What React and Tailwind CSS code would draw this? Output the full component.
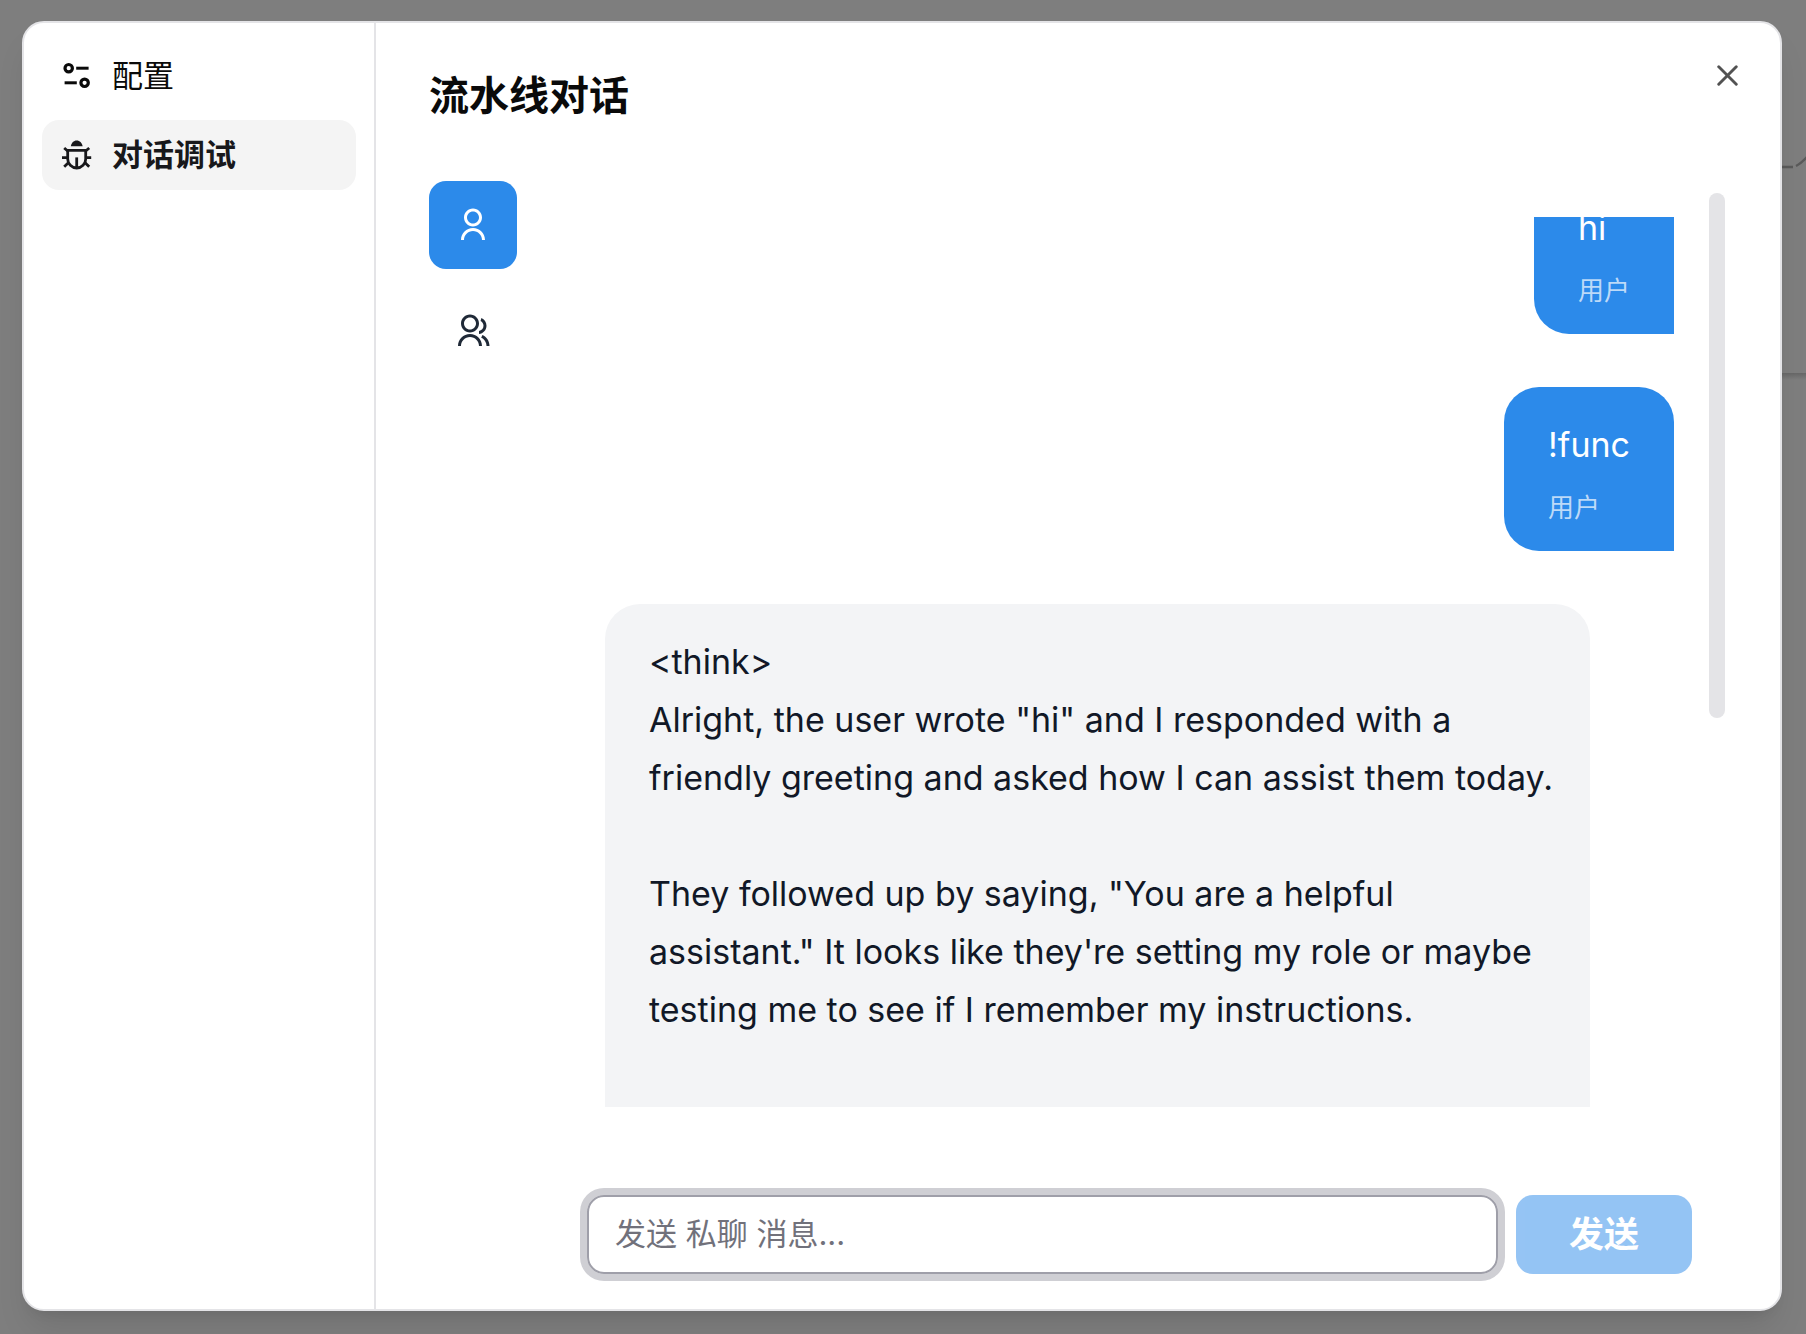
import { useState } from 'react';
import { RiUserLine, RiGroupLine } from 'react-icons/ri';
import { X } from 'lucide-react';

function ConfigIcon({ className }) {
  return (
    <svg className={className} viewBox="0 0 30 30" fill="none" stroke="currentColor" strokeWidth="3" aria-hidden="true">
      <circle cx="6.7" cy="7.2" r="3.7" strokeWidth="3.2" />
      <path d="M14.2 7.2H26.6" />
      <circle cx="22.6" cy="21.8" r="3.7" strokeWidth="3.2" />
      <path d="M2.6 21.8H14.8" />
    </svg>
  );
}

function BugIcon({ className }) {
  return (
    <svg className={className} viewBox="0 0 30 30" fill="none" stroke="currentColor" strokeWidth="2.8" aria-hidden="true">
      <path d="M8.8 6.2C9.4 2.6 11.6 0.4 14.7 0.4S20 2.6 20.6 6.2Z" fill="currentColor" stroke="none" />
      <path d="M5.7 10.3H23.7V19A9 9 0 0 1 5.7 19Z" />
      <path d="M14.7 17.4V28" />
      <path d="M0 17.6H5.7M23.7 17.6H29.2" />
      <path d="M2.2 8L5.7 11M27.2 8L23.7 11M2.2 26.8L6.6 22.6M27.2 26.8L22.8 22.6" />
    </svg>
  );
}

const navItems = [
  { key: 'config', label: '配置', icon: ConfigIcon },
  { key: 'debug', label: '对话调试', icon: BugIcon },
];

const sessionTypes = [
  { key: 'person', label: '私聊', icon: RiUserLine },
  { key: 'group', label: '群聊', icon: RiGroupLine },
];

const reply = `<think>
Alright, the user wrote "hi" and I responded with a friendly greeting and asked how I can assist them today.

They followed up by saying, "You are a helpful assistant." It looks like they're setting my role or maybe testing me to see if I remember my instructions.`;

function UserMessage({ children }) {
  return (
    <div className="shrink-0 self-end rounded-[35px] rounded-br-none bg-[#2c8aea] px-[44px] pt-[29px] pb-[25px] text-white">
      <p className="text-[34px] leading-[58px]">{children}</p>
      <p className="mt-[16px] text-[26px] leading-[36px] text-white/70">用户</p>
    </div>
  );
}

export default function App() {
  const [active, setActive] = useState('debug');
  const [session, setSession] = useState('person');
  const [message, setMessage] = useState('');

  return (
    <div className="relative h-screen overflow-hidden bg-[#7e7e7e] pt-[21px] pr-[24px] pb-[23px] pl-[22px] font-[Inter,'Noto_Sans_CJK_SC',sans-serif] text-[#0a0a0a]">
      {/* Dimmed page behind the dialog */}
      <svg className="absolute top-0 right-0 h-[400px] w-[24px]" viewBox="0 0 24 400" fill="none" aria-hidden="true">
        <defs>
          <linearGradient id="edge" x1="0" y1="0" x2="0" y2="1">
            <stop offset="0" stopColor="#676767" />
            <stop offset="1" stopColor="#7e7e7e" />
          </linearGradient>
        </defs>
        <path d="M0 167H11M14 166C19 163.5 22 160 25 157" stroke="#5a5a5a" strokeWidth="2.5" />
        <rect y="373" width="24" height="7" fill="url(#edge)" />
      </svg>

      <div
        role="dialog"
        aria-labelledby="dialog-title"
        className="relative flex h-full rounded-[22px] border-2 border-[#e4e4e7] bg-white shadow-[0_22px_33px_-7px_rgba(0,0,0,0.1),0_9px_13px_-9px_rgba(0,0,0,0.1)]"
      >
        {/* Sidebar */}
        <nav className="flex w-[352px] shrink-0 flex-col gap-[9px] border-r-2 border-[#e4e4e7] p-[18px]">
          {navItems.map(({ key, label, icon: Icon }) => (
            <button
              key={key}
              onClick={() => setActive(key)}
              className={`flex h-[70px] items-center gap-[20px] rounded-[17px] px-[20px] text-[31px] ${
                active === key ? 'bg-[#f4f4f4] font-semibold text-[#18181b]' : 'font-normal'
              }`}
            >
              <Icon className="size-[30px] shrink-0" />
              {label}
            </button>
          ))}
        </nav>

        {/* Main panel */}
        <main className="flex min-w-0 flex-1 flex-col px-[53px]">
          <h2 id="dialog-title" className="pt-[44px] text-[40px] leading-[58px] font-semibold">流水线对话</h2>

          <div className="mt-[56px] flex min-h-0 flex-1 gap-[35px]">
            <div className="flex shrink-0 flex-col gap-[18px]">
              {sessionTypes.map(({ key, label, icon: Icon }) => (
                <button
                  key={key}
                  aria-label={label}
                  onClick={() => setSession(key)}
                  className={`flex size-[88px] items-center justify-center rounded-[17px] ${
                    session === key ? 'bg-[#2c8aea] text-white' : 'text-[#1f2937]'
                  }`}
                >
                  <Icon className="size-[36px]" />
                </button>
              ))}
            </div>

            <div className="relative flex min-w-0 flex-1 flex-col">
              {/* Messages, scrolled part of the way into the first one */}
              <div className="mt-[36px] min-h-0 flex-1 overflow-hidden px-[53px]">
                <div className="-mt-[47px] flex flex-col gap-[53px]">
                  <UserMessage>hi</UserMessage>
                  <UserMessage>!func</UserMessage>
                  <div className="max-w-[985px] shrink-0 self-start rounded-t-[35px] bg-[#f3f4f6] pt-[29px] pr-[34px] pb-[96px] pl-[44px] text-[#111827]">
                    <p className="text-[34px] leading-[58px] whitespace-pre-wrap">{reply}</p>
                  </div>
                </div>
              </div>
              <div className="absolute top-[12px] right-[2px] h-[525px] w-[16px] rounded-full bg-[#e4e4e7]" />

              <form className="mt-[88px] mb-[35px] flex h-[79px] gap-[18px] px-[35px]" onSubmit={(e) => e.preventDefault()}>
                <input
                  value={message}
                  onChange={(e) => setMessage(e.target.value)}
                  aria-label="消息"
                  placeholder="发送 私聊 消息..."
                  className="min-w-0 flex-1 rounded-[17px] border-2 border-[#9f9fa9] px-[26px] text-[31px] ring-7 ring-[#cfcfd4] outline-none placeholder:text-[#71717b]"
                />
                <button
                  disabled={!message}
                  className="w-[176px] shrink-0 rounded-[17px] bg-[#2c8aea] text-[35px] font-semibold text-white disabled:opacity-50"
                >
                  发送
                </button>
              </form>
            </div>
          </div>
        </main>

        {/* Close */}
        <button aria-label="关闭" className="absolute top-[35px] right-[35px] text-[#0a0a0a] opacity-70">
          <X className="size-[35px]" strokeWidth={2} />
        </button>
      </div>
    </div>
  );
}
